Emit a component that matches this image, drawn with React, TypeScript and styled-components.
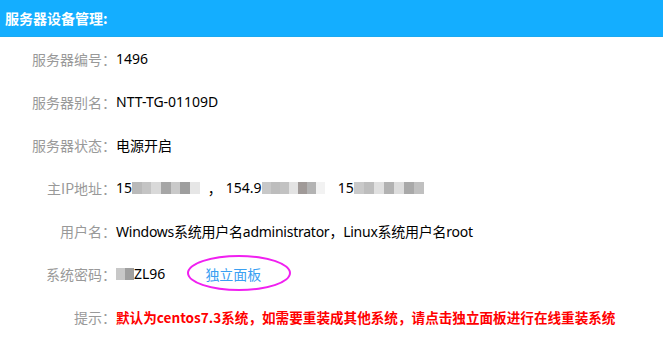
import { createGlobalStyle, styled } from "styled-components";

const GlobalStyle = createGlobalStyle`
  html, body {
    margin: 0;
    padding: 0;
    background: #fff;
  }
  body {
    font-family: "Noto Sans", "Noto Sans CJK SC", sans-serif;
  }
`;

const Panel = styled.div`
  width: 663px;
  height: 343px;
  overflow: hidden;
  background: #fff;
`;

const Header = styled.div`
  height: 37px;
  background: #14aeff;
  border-bottom: 1px solid #1ba9f0;
  box-sizing: border-box;
  display: flex;
  align-items: center;
  padding-left: 5px;
  color: #fff;
  font-size: 14px;
  font-weight: 700;
  font-family: "Noto Sans CJK SC", sans-serif;
`;

const List = styled.div`
  display: flex;
  flex-direction: column;
`;

const Row = styled.div`
  display: flex;
  align-items: center;
  height: 43px;
  font-size: 14px;
`;

const Label = styled.span`
  width: 116px;
  flex: none;
  text-align: right;
  color: #999;
  font-family: "Noto Sans CJK SC", sans-serif;
`;

const Value = styled.span<{ $tight?: boolean }>`
  display: flex;
  align-items: center;
  color: #000;
  font-family: "Noto Sans", "Noto Sans CJK SC", sans-serif;
  letter-spacing: ${(p) => (p.$tight ? "-0.25px" : "0")};
`;

const Sep = styled.span`
  margin: 0 4px 0 8px;
`;

const Gap = styled.span`
  margin-left: 13px;
`;

const Mosaic = styled.span`
  display: inline-flex;
  height: 12px;
  align-items: stretch;
`;

const Cell = styled.span<{ $w: number }>`
  width: ${(p) => p.$w}px;
`;

const LinkWrap = styled.span`
  position: relative;
  margin-left: 40px;
  color: #3aa0f2;
  font-family: "Noto Sans CJK SC", sans-serif;
`;

const Ring = styled.span`
  position: absolute;
  box-sizing: border-box;
  left: -18px;
  top: -9px;
  width: 104px;
  height: 36px;
  border: 2px solid #f020f0;
  border-radius: 50%;
`;

const Hint = styled.span`
  color: #ff0000;
  font-weight: 700;
  font-size: 13.6px;
  font-family: "Noto Sans CJK SC", sans-serif;
`;

const shades = (list: string[], w = 10) =>
  list.map((c, i) => <Cell key={i} $w={w} style={{ background: c }} />);

export default function App() {
  return (
    <Panel>
      <GlobalStyle />
      <Header>服务器设备管理:</Header>
      <List>
        <Row>
          <Label>服务器编号：</Label>
          <Value>1496</Value>
        </Row>
        <Row>
          <Label>服务器别名：</Label>
          <Value>NTT-TG-01109D</Value>
        </Row>
        <Row>
          <Label>服务器状态：</Label>
          <Value>电源开启</Value>
        </Row>
        <Row>
          <Label>主IP地址：</Label>
          <Value>
            15
            <Mosaic>
              {shades(["#b9b9b9", "#c4c4c4", "#d9d9d9", "#a6a6a6", "#c9c9c9", "#9e9e9e", "#e6e6e6"], 9.7)}
            </Mosaic>
            <Sep>，</Sep>
            154.9
            <Mosaic>
              {shades(["#c8c8c8", "#bdbdbd", "#c2c2c2", "#e3e3e3", "#a09a98", "#b3b3b3", "#f2f2f2"], 9)}
            </Mosaic>
            <Gap>15</Gap>
            <Mosaic>
              {shades(["#c9c9c9", "#bdbdbd", "#e0e0e0", "#b2b2b2", "#dddddd", "#a9a9a9", "#c0c0c0"])}
            </Mosaic>
          </Value>
        </Row>
        <Row>
          <Label>用户名：</Label>
          <Value $tight>Windows系统用户名administrator，Linux系统用户名root</Value>
        </Row>
        <Row>
          <Label>系统密码：</Label>
          <Value>
            <Mosaic>{shades(["#c8c8c8", "#9f9f9f"], 9)}</Mosaic>
            ZL96
            <LinkWrap>
              <Ring />
              独立面板
            </LinkWrap>
          </Value>
        </Row>
        <Row>
          <Label>提示：</Label>
          <Hint>默认为centos7.3系统，如需要重装成其他系统，请点击独立面板进行在线重装系统</Hint>
        </Row>
      </List>
    </Panel>
  );
}
